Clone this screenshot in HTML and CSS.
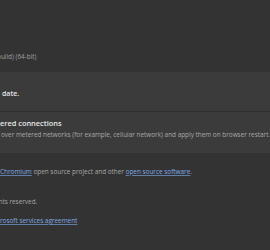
FILE: index.html
```html
<!DOCTYPE html>
<html lang="en">
<head>
<meta charset="utf-8">
<title>About</title>
<link rel="stylesheet" href="styles.css">
</head>
<body>
  <main class="page">
    <p class="line version">build) (64-bit)</p>
    <section class="card">
      <div class="card-row">
        <p class="line heading status">date.</p>
      </div>
      <div class="card-row">
        <p class="line heading">ered connections</p>
        <p class="line desc">over metered networks (for example, cellular network) and apply them on browser restart. Charges may apply.</p>
      </div>
    </section>
    <p class="line info credits"><a href="#">Chromium</a> open source project and other <a href="#">open source software</a>.</p>
    <p class="line info rights">hts reserved.</p>
    <p class="line info terms"><a href="#">rosoft services agreement</a></p>
  </main>
</body>
</html>
```

FILE: styles.css
```css
html, body {
  margin: 0;
  padding: 0;
  background: #333333;
  height: 100%;
  overflow: hidden;
}

.page {
  padding-top: 52px;
  font-family: "Open Sans", "Noto Sans", sans-serif;
  font-size: 6.4px;
  color: #a8a8a8;
  white-space: nowrap;
  overflow: hidden;
}

.line {
  margin: 0;
  line-height: 10px;
}

.version {
  text-indent: -3px;
  color: #a0a0a0;
}

.card {
  margin-top: 10px;
  background: #3b3b3b;
}

.card-row:first-child {
  padding: 17px 0 12px 2px;
  border-bottom: 1px solid #2e2e2e;
}

.card-row:last-child {
  padding: 6px 0 14px 0;
}

.heading {
  font-size: 7.4px;
  font-weight: 600;
  color: #e6e6e6;
}

.status {
  font-size: 7px;
}

.desc {
  margin-top: 2px;
  padding-left: 1px;
}

.card-row:last-child {
  padding-bottom: 13px;
}

.credits {
  margin-top: 14px;
}

.rights {
  margin-top: 20px;
  text-indent: -1.5px;
}

.terms {
  margin-top: 9px;
}

a {
  color: #7fa9e0;
  text-decoration: underline;
  text-decoration-color: #5f7fa8;
}
```
